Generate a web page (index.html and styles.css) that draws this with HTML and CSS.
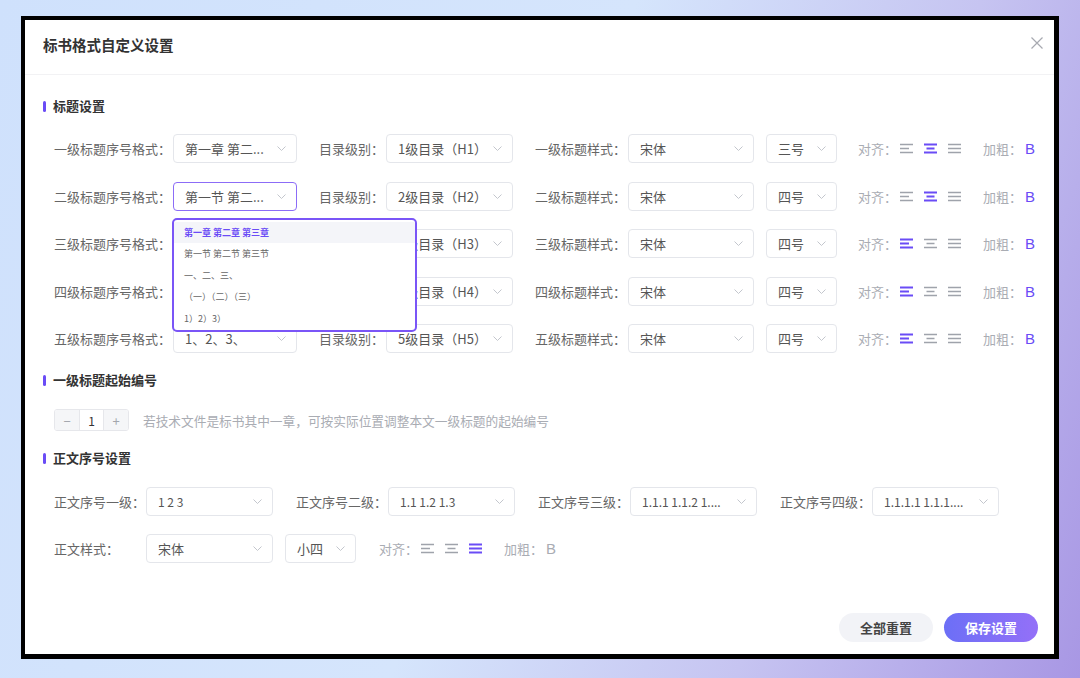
FILE: index.html
```html
<!DOCTYPE html>
<html lang="zh-CN">
<head>
    <meta charset="UTF-8">
    <meta name="viewport" content="width=device-width, initial-scale=1.0">
    <title>标书格式自定义设置</title>
    <link rel="stylesheet" href="styles.css">
</head>
<body>
    <div class="modal">
        <div class="modal-header">
            <h2>标书格式自定义设置</h2>
            <span class="close">
                <svg width="12" height="12" viewBox="0 0 12 12"><path d="M0.5 0.5L11.5 11.5M11.5 0.5L0.5 11.5" stroke="#a7a9b0" stroke-width="1.2" fill="none"/></svg>
            </span>
        </div>

        <div class="modal-body">
            <!-- 标题设置 -->
            <h3 class="sec-title">标题设置</h3>
            <div class="rows">
                <div class="row">
                    <div class="field"><span class="lbl">一级标题序号格式：</span><div class="select s1"><span>第一章 第二...</span><i class="chev"></i></div></div>
                    <div class="field"><span class="lbl">目录级别：</span><div class="select s2"><span>1级目录（H1）</span><i class="chev"></i></div></div>
                    <div class="field"><span class="lbl">一级标题样式：</span><div class="select s3"><span>宋体</span><i class="chev"></i></div></div>
                    <div class="select s4 near"><span>三号</span><i class="chev"></i></div>
                    <div class="field tools">
                        <span class="lbl light">对齐：</span>
                        <svg class="al" viewBox="0 0 13 11"><path d="M0 1.5h13M0 5.5h9M0 9.5h13"/></svg>
                        <svg class="al on" viewBox="0 0 13 11"><path d="M0 1.5h13M2.5 5.5h8M0 9.5h13"/></svg>
                        <svg class="al" viewBox="0 0 13 11"><path d="M0 1.5h13M0 5.5h13M0 9.5h13"/></svg>
                        <span class="lbl light bold-lbl">加粗：</span><span class="bold on">B</span>
                    </div>
                </div>
                <div class="row">
                    <div class="field drop-host">
                        <span class="lbl">二级标题序号格式：</span><div class="select s1 open"><span>第一节 第二...</span><i class="chev"></i></div>
                        <ul class="dropdown">
                            <li class="active">第一章 第二章 第三章</li>
                            <li>第一节 第二节 第三节</li>
                            <li>一、二、三、</li>
                            <li>（一）（二）（三）</li>
                            <li>1）2）3）</li>
                        </ul>
                    </div>
                    <div class="field"><span class="lbl">目录级别：</span><div class="select s2"><span>2级目录（H2）</span><i class="chev"></i></div></div>
                    <div class="field"><span class="lbl">二级标题样式：</span><div class="select s3"><span>宋体</span><i class="chev"></i></div></div>
                    <div class="select s4 near"><span>四号</span><i class="chev"></i></div>
                    <div class="field tools">
                        <span class="lbl light">对齐：</span>
                        <svg class="al" viewBox="0 0 13 11"><path d="M0 1.5h13M0 5.5h9M0 9.5h13"/></svg>
                        <svg class="al on" viewBox="0 0 13 11"><path d="M0 1.5h13M2.5 5.5h8M0 9.5h13"/></svg>
                        <svg class="al" viewBox="0 0 13 11"><path d="M0 1.5h13M0 5.5h13M0 9.5h13"/></svg>
                        <span class="lbl light bold-lbl">加粗：</span><span class="bold on">B</span>
                    </div>
                </div>
                <div class="row">
                    <div class="field"><span class="lbl">三级标题序号格式：</span><div class="select s1"><span></span><i class="chev"></i></div></div>
                    <div class="field"><span class="lbl">目录级别：</span><div class="select s2"><span>3级目录（H3）</span><i class="chev"></i></div></div>
                    <div class="field"><span class="lbl">三级标题样式：</span><div class="select s3"><span>宋体</span><i class="chev"></i></div></div>
                    <div class="select s4 near"><span>四号</span><i class="chev"></i></div>
                    <div class="field tools">
                        <span class="lbl light">对齐：</span>
                        <svg class="al on" viewBox="0 0 13 11"><path d="M0 1.5h13M0 5.5h9M0 9.5h13"/></svg>
                        <svg class="al" viewBox="0 0 13 11"><path d="M0 1.5h13M2.5 5.5h8M0 9.5h13"/></svg>
                        <svg class="al" viewBox="0 0 13 11"><path d="M0 1.5h13M0 5.5h13M0 9.5h13"/></svg>
                        <span class="lbl light bold-lbl">加粗：</span><span class="bold on">B</span>
                    </div>
                </div>
                <div class="row">
                    <div class="field"><span class="lbl">四级标题序号格式：</span><div class="select s1"><span></span><i class="chev"></i></div></div>
                    <div class="field"><span class="lbl">目录级别：</span><div class="select s2"><span>4级目录（H4）</span><i class="chev"></i></div></div>
                    <div class="field"><span class="lbl">四级标题样式：</span><div class="select s3"><span>宋体</span><i class="chev"></i></div></div>
                    <div class="select s4 near"><span>四号</span><i class="chev"></i></div>
                    <div class="field tools">
                        <span class="lbl light">对齐：</span>
                        <svg class="al on" viewBox="0 0 13 11"><path d="M0 1.5h13M0 5.5h9M0 9.5h13"/></svg>
                        <svg class="al" viewBox="0 0 13 11"><path d="M0 1.5h13M2.5 5.5h8M0 9.5h13"/></svg>
                        <svg class="al" viewBox="0 0 13 11"><path d="M0 1.5h13M0 5.5h13M0 9.5h13"/></svg>
                        <span class="lbl light bold-lbl">加粗：</span><span class="bold on">B</span>
                    </div>
                </div>
                <div class="row">
                    <div class="field"><span class="lbl">五级标题序号格式：</span><div class="select s1"><span>1、2、3、</span><i class="chev"></i></div></div>
                    <div class="field"><span class="lbl">目录级别：</span><div class="select s2"><span>5级目录（H5）</span><i class="chev"></i></div></div>
                    <div class="field"><span class="lbl">五级标题样式：</span><div class="select s3"><span>宋体</span><i class="chev"></i></div></div>
                    <div class="select s4 near"><span>四号</span><i class="chev"></i></div>
                    <div class="field tools">
                        <span class="lbl light">对齐：</span>
                        <svg class="al on" viewBox="0 0 13 11"><path d="M0 1.5h13M0 5.5h9M0 9.5h13"/></svg>
                        <svg class="al" viewBox="0 0 13 11"><path d="M0 1.5h13M2.5 5.5h8M0 9.5h13"/></svg>
                        <svg class="al" viewBox="0 0 13 11"><path d="M0 1.5h13M0 5.5h13M0 9.5h13"/></svg>
                        <span class="lbl light bold-lbl">加粗：</span><span class="bold on">B</span>
                    </div>
                </div>
            </div>

            <!-- 一级标题起始编号 -->
            <h3 class="sec-title sec-2">一级标题起始编号</h3>
            <div class="start-row">
                <div class="stepper">
                    <span class="step">−</span>
                    <span class="val">1</span>
                    <span class="step">+</span>
                </div>
                <span class="hint">若技术文件是标书其中一章，可按实际位置调整本文一级标题的起始编号</span>
            </div>

            <!-- 正文序号设置 -->
            <h3 class="sec-title sec-3">正文序号设置</h3>
            <div class="rows rows-body">
                <div class="row">
                    <div class="field"><span class="lbl wide">正文序号一级：</span><div class="select s2 num"><span>1 2 3</span><i class="chev"></i></div></div>
                    <div class="field"><span class="lbl wide">正文序号二级：</span><div class="select s2 num"><span>1.1 1.2 1.3</span><i class="chev"></i></div></div>
                    <div class="field"><span class="lbl wide">正文序号三级：</span><div class="select s2 num"><span>1.1.1 1.1.2 1....</span><i class="chev"></i></div></div>
                    <div class="field"><span class="lbl wide">正文序号四级：</span><div class="select s2 num"><span>1.1.1.1 1.1.1....</span><i class="chev"></i></div></div>
                </div>
                <div class="row">
                    <div class="field"><span class="lbl wide">正文样式：</span><div class="select s2"><span>宋体</span><i class="chev"></i></div></div>
                    <div class="select s4 near"><span>小四</span><i class="chev"></i></div>
                    <div class="field tools">
                        <span class="lbl light">对齐：</span>
                        <svg class="al" viewBox="0 0 13 11"><path d="M0 1.5h13M0 5.5h9M0 9.5h13"/></svg>
                        <svg class="al" viewBox="0 0 13 11"><path d="M0 1.5h13M2.5 5.5h8M0 9.5h13"/></svg>
                        <svg class="al on" viewBox="0 0 13 11"><path d="M0 1.5h13M0 5.5h13M0 9.5h13"/></svg>
                        <span class="lbl light bold-lbl">加粗：</span><span class="bold">B</span>
                    </div>
                </div>
            </div>
        </div>

        <div class="modal-footer">
            <button class="btn btn-reset">全部重置</button>
            <button class="btn btn-save">保存设置</button>
        </div>
    </div>
</body>
</html>
```

FILE: styles.css
```css
/* General Styles */
* {
    box-sizing: border-box;
}

body {
    margin: 0;
    height: 678px;
    overflow: hidden;
    background: linear-gradient(110deg, #cfe1fc 0%, #d5e5fc 48%, #c6c4f1 74%, #a897e4 100%);
    font-family: "Noto Sans CJK SC", "Noto Sans", sans-serif;
    color: #333;
}

/* Modal */
.modal {
    width: 1038px;
    height: 643px;
    margin: 16px 0 0 21px;
    background: #fff;
    border-style: solid;
    border-color: #000;
    border-width: 4px 5px 5px 4px;
    display: flex;
    flex-direction: column;
}

.modal-header {
    height: 55px;
    padding: 14px 11px 0 18px;
    border-bottom: 1px solid #f2f2f4;
    display: flex;
    justify-content: space-between;
    align-items: flex-start;
}

.modal-header h2 {
    margin: 0;
    font-size: 14.5px;
    line-height: 22px;
    font-weight: 700;
    color: #333;
}

.close {
    display: flex;
    margin-top: 3px;
}

.modal-body {
    flex: 1;
    padding: 21px 0 0 18px;
}

/* Section titles */
.sec-title {
    margin: 0;
    display: flex;
    align-items: center;
    gap: 7px;
    font-size: 13px;
    line-height: 20px;
    font-weight: 700;
    color: #333;
}

.sec-title::before {
    content: "";
    width: 3px;
    height: 11px;
    border-radius: 2px;
    background: #6a4cf6;
}

.sec-2,
.sec-3 {
    margin-top: 17px;
}

/* Rows */
.rows {
    margin-top: 18px;
    padding-left: 11px;
    display: flex;
    flex-direction: column;
    gap: 18.5px;
}

.rows-body {
    margin-top: 19px;
    gap: 18px;
}

.row {
    display: flex;
    align-items: center;
    height: 29px;
}

.field {
    display: flex;
    align-items: center;
}

.field + .field {
    margin-left: 22px;
}

.rows-body .field + .field {
    margin-left: 23px;
}

.lbl {
    font-size: 13px;
    color: #666;
    margin-right: 2px;
    white-space: nowrap;
}

.lbl.wide {
    width: 92px;
    margin-right: 0;
}

.lbl.light {
    color: #a9acb3;
    margin-right: 3px;
}

/* Select boxes */
.select {
    height: 29px;
    border: 1px solid #e4e6eb;
    border-radius: 4px;
    padding: 0 10px 0 11px;
    display: flex;
    align-items: center;
    justify-content: space-between;
    font-size: 13px;
    color: #555;
    white-space: nowrap;
}

.select.num {
    font-size: 12px;
}

.select.open {
    border-color: #8c6cf7;
}

.s1 { width: 124px; }
.s2 { width: 127px; }
.s3 { width: 126px; }
.s4 { width: 71px; }

.near {
    margin-left: 12px;
}

.chev {
    width: 9px;
    height: 5px;
    flex: none;
    background: url("data:image/svg+xml,%3Csvg xmlns='http://www.w3.org/2000/svg' width='9' height='5' viewBox='0 0 9 5'%3E%3Cpath d='M0.5 0.5L4.5 4.5L8.5 0.5' stroke='%23c3c6cd' fill='none' stroke-width='1'/%3E%3C/svg%3E") no-repeat;
}

/* Align icons and bold toggle */
.tools {
    margin-left: 21px;
}

.rows-body .tools {
    margin-left: 23px;
}

.al {
    width: 13px;
    height: 11px;
    margin-right: 11px;
    fill: none;
    stroke: #9fa3ab;
    stroke-width: 1.6;
}

.al.on {
    stroke: #6a4cf6;
    stroke-width: 2;
}

.bold-lbl {
    margin-left: 11px;
    margin-right: 5px;
}

.bold {
    font-family: "Liberation Sans", Arial, sans-serif;
    font-size: 15px;
    color: #a9acb3;
}

.bold.on {
    color: #6a4cf6;
}

/* Dropdown */
.drop-host {
    position: relative;
}

.dropdown {
    position: absolute;
    left: 118px;
    top: 36px;
    z-index: 10;
    width: 245px;
    margin: 0;
    padding: 2px 0 0;
    list-style: none;
    background: #fff;
    border: 2px solid #7a55f7;
    border-radius: 5px;
    height: 114px;
}

.dropdown li {
    height: 21.6px;
    line-height: 21.6px;
    padding-left: 10px;
    font-size: 9px;
    color: #666;
}

.dropdown li.active {
    background: #f4f5f9;
    color: #6a4cf6;
    font-weight: 700;
}

/* Start number */
.start-row {
    margin-top: 19px;
    padding-left: 11px;
    display: flex;
    align-items: center;
}

.stepper {
    width: 75px;
    height: 22px;
    display: flex;
    border: 1px solid #e6e7eb;
    border-radius: 3px;
    overflow: hidden;
}

.step {
    flex: 1;
    background: #f5f6f8;
    color: #a3a6ad;
    font-size: 13px;
    display: flex;
    align-items: center;
    justify-content: center;
}

.val {
    width: 25px;
    border-left: 1px solid #e6e7eb;
    border-right: 1px solid #e6e7eb;
    font-size: 12px;
    color: #333;
    display: flex;
    align-items: center;
    justify-content: center;
}

.hint {
    margin-left: 14px;
    font-size: 12.7px;
    color: #a9acb3;
}

/* Footer buttons */
.modal-footer {
    display: flex;
    justify-content: flex-end;
    gap: 11px;
    padding: 0 16px 12px 0;
}

.btn {
    width: 94px;
    height: 29px;
    border: none;
    border-radius: 15px;
    font-family: inherit;
    font-size: 13px;
    font-weight: 700;
    cursor: pointer;
}

.btn-reset {
    background: #f2f3f7;
    color: #444;
}

.btn-save {
    background: linear-gradient(90deg, #6c6ff6, #9470f8);
    color: #fff;
}
```
